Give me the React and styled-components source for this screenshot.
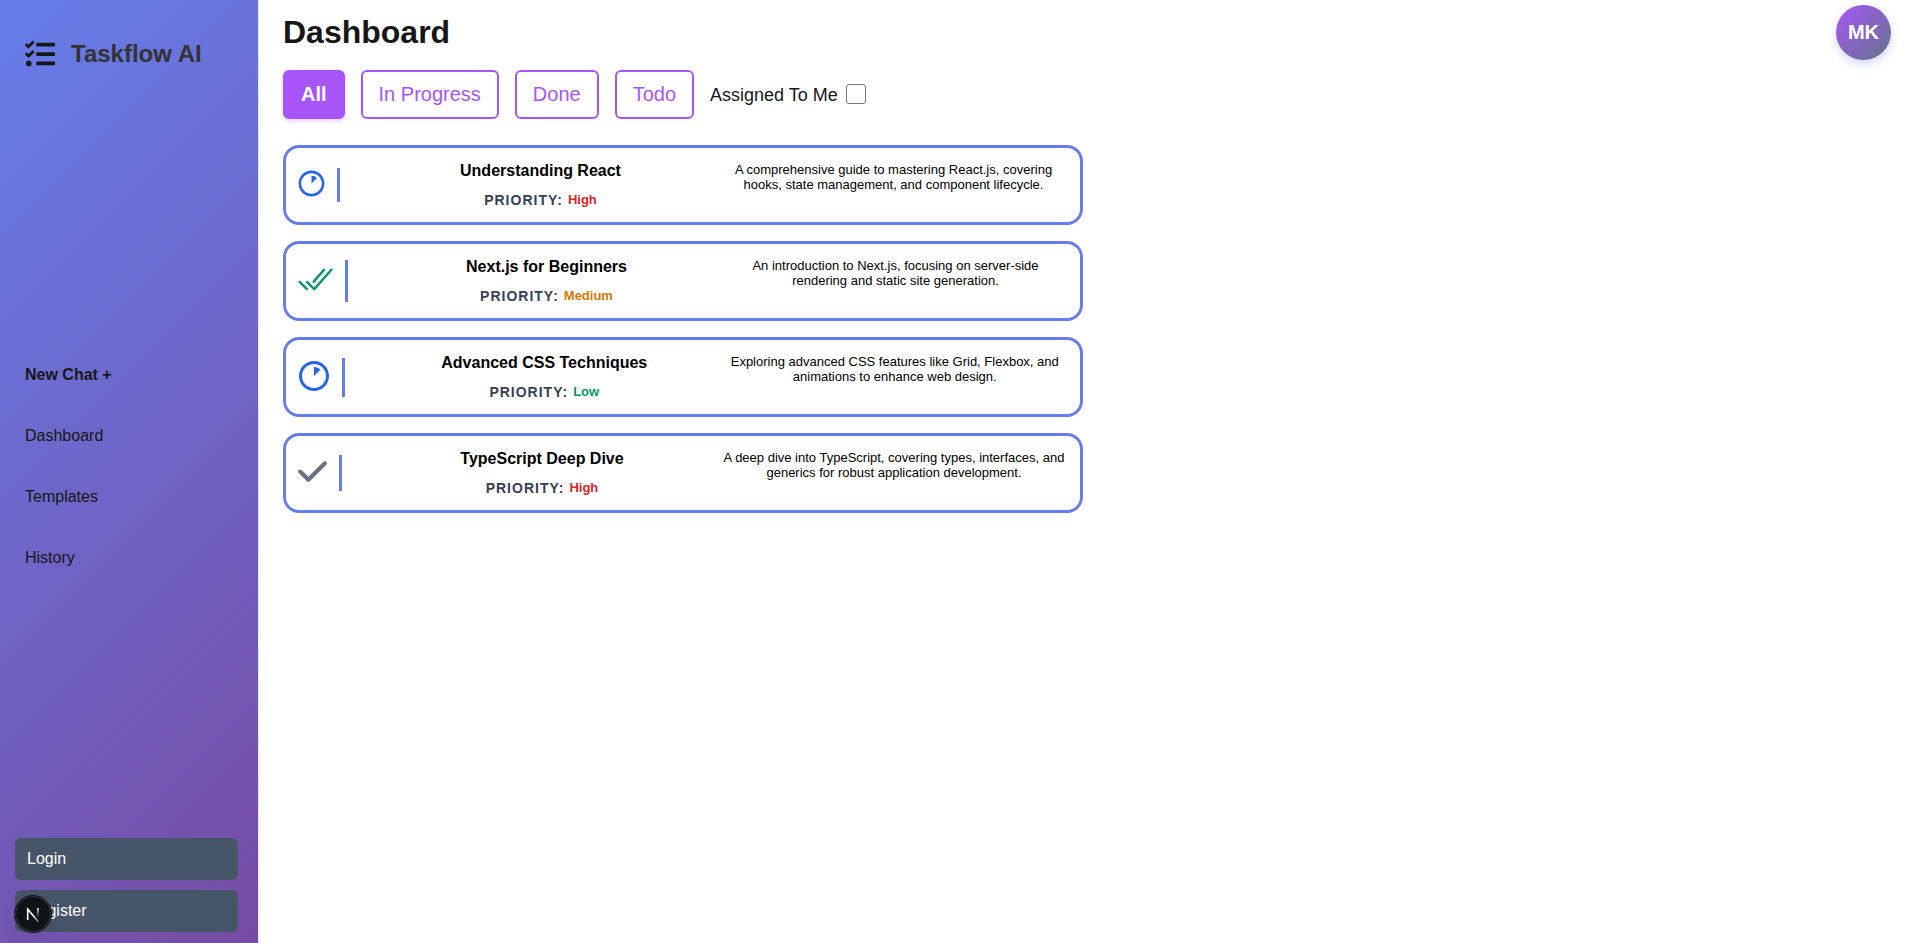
import React, { useState } from "react";
import styled, { createGlobalStyle } from "styled-components";
import { FaTasks } from "react-icons/fa";
import { FaCheck } from "react-icons/fa6";
import { RiProgress1Line } from "react-icons/ri";
import { IoCheckmarkDone } from "react-icons/io5";

const GlobalStyle = createGlobalStyle`
  *, *::before, *::after { box-sizing: border-box; }
  body {
    margin: 0;
    background: #ffffff;
    color: #171717;
    font-family: "Liberation Sans", Arial, Helvetica, sans-serif;
    font-size: 16px;
  }
`;

const Page = styled.div`
  display: flex;
  min-height: 100vh;
`;

const Sidebar = styled.aside`
  display: flex;
  flex-direction: column;
  justify-content: space-between;
  flex: 0 0 259px;
  padding: 36px 20px 11px 15px;
  background: linear-gradient(135deg, #667eea 0%, #764ba2 100%);
  border-right: 1px solid #e5e7eb;
`;

const Brand = styled.div`
  display: flex;
  align-items: center;
  gap: 16px;
  padding: 0 10px;
  height: 36px;
  margin-bottom: 22px;
`;

const BrandName = styled.span`
  color: #333333;
  font-size: 24px;
  font-weight: 700;
`;

const Nav = styled.nav`
  display: flex;
  flex-direction: column;
  align-items: flex-start;
  gap: 43px;
  padding: 0 10px;
`;

const NavLink = styled.a`
  color: inherit;
  font-weight: ${({ $strong }) => ($strong ? 700 : 400)};
  line-height: 18px;
  text-decoration: none;
`;

const AuthButtons = styled.div`
  display: flex;
  flex-direction: column;
  gap: 10px;
`;

const AuthButton = styled.button`
  padding: 12px;
  border: 0;
  border-radius: 6px;
  background: #475569;
  color: #ffffff;
  font: inherit;
  line-height: 18px;
  text-align: left;
`;

const Main = styled.main`
  flex: 1;
  padding: 5px 16px 24px 24px;
`;

const Header = styled.header`
  display: flex;
  justify-content: space-between;
  align-items: flex-start;
`;

const Title = styled.h1`
  margin: 0;
  padding-top: 9px;
  font-size: 32px;
  line-height: 37px;
`;

const Avatar = styled.button`
  width: 55px;
  height: 55px;
  padding: 0;
  border: 0;
  border-radius: 50%;
  background: linear-gradient(135deg, #a855f7, #64748b);
  box-shadow: 0 4px 10px rgba(102, 126, 234, 0.3);
  color: #ffffff;
  font: inherit;
  font-size: 20px;
  font-weight: 700;
`;

const Filters = styled.div`
  display: flex;
  align-items: center;
  gap: 16px;
  padding-top: 10px;
`;

const FilterButton = styled.button`
  padding: 11px 16px;
  border: 2px solid #a855f7;
  border-radius: 6px;
  background: ${({ $active }) => ($active ? "#a855f7" : "#ffffff")};
  box-shadow: ${({ $active }) => ($active ? "0 2px 4px rgba(168, 85, 247, 0.3)" : "none")};
  color: ${({ $active }) => ($active ? "#ffffff" : "#a855f7")};
  font: inherit;
  font-size: 20px;
  font-weight: ${({ $active }) => ($active ? 700 : 400)};
  line-height: 23px;
`;

const AssignedLabel = styled.label`
  display: flex;
  align-items: flex-start;
  gap: 8px;
  font-size: 18px;
  line-height: 22px;
`;

const Checkbox = styled.input`
  appearance: none;
  width: 20px;
  height: 20px;
  margin: 0;
  border: 1px solid #767676;
  border-radius: 3px;
  background: #ffffff;

  &:checked {
    border-color: #a855f7;
    background: #a855f7;
  }
`;

const TaskList = styled.ul`
  display: flex;
  flex-direction: column;
  gap: 16px;
  max-width: 800px;
  margin: 26px 0 0;
  padding: 0;
  list-style: none;
`;

const TaskCard = styled.li`
  display: flex;
  align-items: center;
  gap: 24px;
  padding: 14px 10px;
  border: 3px solid #667eea;
  border-radius: 16px;
  background: #ffffff;
  color: #000000;
  text-align: center;
`;

const statusColors = { progress: "#2563eb", done: "#059669", todo: "#6b7280" };
const priorityColors = { High: "#dc2626", Medium: "#d97706", Low: "#059669" };

const StatusMark = styled.span`
  display: flex;
  align-items: flex-start;
  height: ${({ $size }) => $size}px;
  padding-right: 10px;
  border-right: 3px solid #667eea;
  color: ${({ $status }) => statusColors[$status]};
`;

const TaskColumns = styled.div`
  display: grid;
  grid-template-columns: 1fr 1fr;
  flex: 1;
`;

const TaskTitle = styled.h2`
  margin: 0;
  font-size: 16px;
  line-height: 18px;
`;

const Priority = styled.p`
  display: flex;
  justify-content: center;
  align-items: center;
  gap: 5px;
  margin: 12px 0 0;
  font-size: 13px;
  font-weight: 700;
  line-height: 16px;
`;

const PriorityName = styled.span`
  color: #374151;
  font-size: 14px;
  letter-spacing: 1px;
`;

const PriorityValue = styled.span`
  color: ${({ $level }) => priorityColors[$level]};
`;

const Description = styled.p`
  margin: 0;
  padding: 0 4px;
  font-size: 13px;
  line-height: 15px;
`;

const DevBadge = styled.button`
  position: fixed;
  left: 14px;
  bottom: 10px;
  width: 38px;
  height: 38px;
  padding: 0;
  border: 1px solid #171717;
  border-radius: 50%;
  background: #0f1315;
  box-shadow: inset 0 0 0 1px #3a3a3d, 0 8px 20px rgba(0, 0, 0, 0.06);

  svg { display: block; }
`;

const tasks = [
  { title: "Understanding React", priority: "High", status: "progress", size: 34,
    description: "A comprehensive guide to mastering React.js, covering hooks, state management, and component lifecycle." },
  { title: "Next.js for Beginners", priority: "Medium", status: "done", size: 42,
    description: "An introduction to Next.js, focusing on server-side rendering and static site generation." },
  { title: "Advanced CSS Techniques", priority: "Low", status: "progress", size: 39,
    description: "Exploring advanced CSS features like Grid, Flexbox, and animations to enhance web design." },
  { title: "TypeScript Deep Dive", priority: "High", status: "todo", size: 36,
    description: "A deep dive into TypeScript, covering types, interfaces, and generics for robust application development." },
];

const icons = { progress: RiProgress1Line, done: IoCheckmarkDone, todo: FaCheck };
const labels = { progress: "In Progress", done: "Done", todo: "Todo" };
const filters = [["all", "All"], ...Object.entries(labels)];

function Task({ task }) {
  const Icon = icons[task.status];
  return (
    <TaskCard>
      <StatusMark $size={task.size} $status={task.status}>
        <Icon size={task.size - 3} aria-label={labels[task.status]} />
      </StatusMark>
      <TaskColumns>
        <div>
          <TaskTitle>{task.title}</TaskTitle>
          <Priority>
            <PriorityName>PRIORITY:</PriorityName>
            <PriorityValue $level={task.priority}>{task.priority}</PriorityValue>
          </Priority>
        </div>
        <Description>{task.description}</Description>
      </TaskColumns>
    </TaskCard>
  );
}

function NextLogo() {
  return (
    <svg width="36" height="36" viewBox="0 0 36 36" fill="none" aria-hidden="true">
      <defs>
        <linearGradient id="diagonal" x1="19" y1="19" x2="24" y2="26" gradientUnits="userSpaceOnUse">
          <stop stopColor="#fff" />
          <stop offset="1" stopColor="#fff" stopOpacity="0.3" />
        </linearGradient>
        <linearGradient id="stem" x1="23" y1="12" x2="23" y2="21" gradientUnits="userSpaceOnUse">
          <stop stopColor="#fff" />
          <stop offset="1" stopColor="#fff" stopOpacity="0" />
        </linearGradient>
      </defs>
      <path d="M12.7 24V13.2L23.4 25.8" stroke="url(#diagonal)" strokeWidth="1.6" />
      <path d="M22.9 12V20.5" stroke="url(#stem)" strokeWidth="1.6" />
    </svg>
  );
}

export default function App() {
  const [filter, setFilter] = useState("all");
  const shown = tasks.filter((task) => filter === "all" || task.status === filter);

  return (
    <Page>
      <GlobalStyle />
      <Sidebar>
        <Brand>
          <FaTasks size={30} />
          <BrandName>Taskflow AI</BrandName>
        </Brand>
        <Nav>
          <NavLink href="#new" $strong>New Chat +</NavLink>
          <NavLink href="#dashboard">Dashboard</NavLink>
          <NavLink href="#templates">Templates</NavLink>
          <NavLink href="#history">History</NavLink>
        </Nav>
        <AuthButtons>
          <AuthButton type="button">Login</AuthButton>
          <AuthButton type="button">Register</AuthButton>
        </AuthButtons>
      </Sidebar>
      <Main>
        <Header>
          <Title>Dashboard</Title>
          <Avatar type="button">MK</Avatar>
        </Header>
        <Filters>
          {filters.map(([id, text]) => (
            <FilterButton key={id} type="button" $active={filter === id} onClick={() => setFilter(id)}>
              {text}
            </FilterButton>
          ))}
          <AssignedLabel htmlFor="assigned">
            Assigned To Me
            <Checkbox id="assigned" type="checkbox" />
          </AssignedLabel>
        </Filters>
        <TaskList>
          {shown.map((task) => <Task key={task.title} task={task} />)}
        </TaskList>
      </Main>
      <DevBadge type="button" aria-label="Open developer tools">
        <NextLogo />
      </DevBadge>
    </Page>
  );
}
